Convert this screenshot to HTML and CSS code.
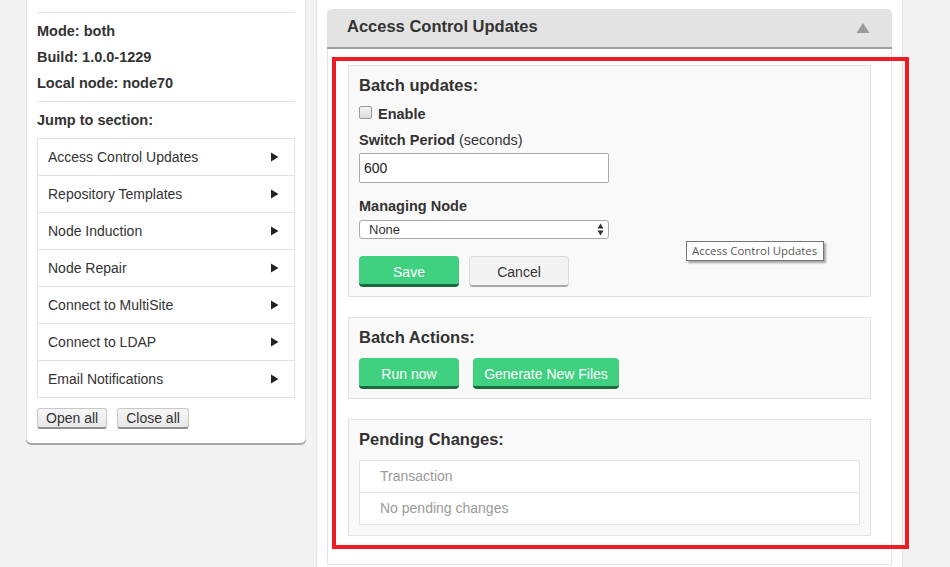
FILE: index.html
```html
<!DOCTYPE html>
<html lang="en">
<head>
<meta charset="utf-8">
<title>Access Control Updates</title>
<link rel="stylesheet" href="styles.css">
</head>
<body>
<div class="page">
  <aside class="sidebar">
    <div class="info">
      <div class="info-line">Mode: both</div>
      <div class="info-line">Build: 1.0.0-1229</div>
      <div class="info-line">Local node: node70</div>
    </div>
    <div class="jump-title">Jump to section:</div>
    <ul class="jump-list">
      <li><span>Access Control Updates</span><svg class="arrow" width="8" height="10" viewBox="0 0 8 10"><path d="M0 0.5 L7.5 5 L0 9.5 Z"/></svg></li>
      <li><span>Repository Templates</span><svg class="arrow" width="8" height="10" viewBox="0 0 8 10"><path d="M0 0.5 L7.5 5 L0 9.5 Z"/></svg></li>
      <li><span>Node Induction</span><svg class="arrow" width="8" height="10" viewBox="0 0 8 10"><path d="M0 0.5 L7.5 5 L0 9.5 Z"/></svg></li>
      <li><span>Node Repair</span><svg class="arrow" width="8" height="10" viewBox="0 0 8 10"><path d="M0 0.5 L7.5 5 L0 9.5 Z"/></svg></li>
      <li><span>Connect to MultiSite</span><svg class="arrow" width="8" height="10" viewBox="0 0 8 10"><path d="M0 0.5 L7.5 5 L0 9.5 Z"/></svg></li>
      <li><span>Connect to LDAP</span><svg class="arrow" width="8" height="10" viewBox="0 0 8 10"><path d="M0 0.5 L7.5 5 L0 9.5 Z"/></svg></li>
      <li><span>Email Notifications</span><svg class="arrow" width="8" height="10" viewBox="0 0 8 10"><path d="M0 0.5 L7.5 5 L0 9.5 Z"/></svg></li>
    </ul>
    <div class="side-buttons">
      <button class="small-btn">Open all</button>
      <button class="small-btn">Close all</button>
    </div>
  </aside>

  <main class="main">
    <div class="acc-header">
      <h2 class="acc-title">Access Control Updates</h2>
      <svg class="acc-toggle" width="14" height="10" viewBox="0 0 14 10"><path d="M7 0 L13.5 10 L0.5 10 Z"/></svg>
    </div>
    <div class="acc-body">
      <section class="box">
        <h3 class="box-title">Batch updates:</h3>
        <label class="check-row"><span class="checkbox"></span><span class="check-label">Enable</span></label>
        <div class="field-label label-period"><b>Switch Period</b> (seconds)</div>
        <input class="text-input" type="text" value="600">
        <div class="field-label label-node"><b>Managing Node</b></div>
        <div class="select-wrap">
          <select class="select"><option>None</option></select>
          <svg class="select-arrows" width="7" height="13" viewBox="0 0 7 13"><path d="M3.5 0.5 L6.5 5.5 L0.5 5.5 Z M3.5 12.5 L6.5 7.5 L0.5 7.5 Z"/></svg>
        </div>
        <div class="btn-row gap10">
          <button class="btn green w100">Save</button>
          <button class="btn grey w100">Cancel</button>
        </div>
      </section>

      <section class="box">
        <h3 class="box-title">Batch Actions:</h3>
        <div class="btn-row gap14 actions">
          <button class="btn green w100">Run now</button>
          <button class="btn green w146">Generate New Files</button>
        </div>
      </section>

      <section class="box last">
        <h3 class="box-title">Pending Changes:</h3>
        <table class="pending">
          <tr><td>Transaction</td></tr>
          <tr><td>No pending changes</td></tr>
        </table>
      </section>
    </div>
  </main>
</div>

<div class="tooltip">Access Control Updates</div>
<div class="highlight"></div>
</body>
</html>
```

FILE: styles.css
```css
html, body {
  margin: 0;
  padding: 0;
}
body {
  background: #f2f2f2;
  font-family: "Liberation Sans", Arial, sans-serif;
  color: #333;
  height: 567px;
  overflow: hidden;
  position: relative;
}
.page {
  display: flex;
  align-items: flex-start;
  padding-left: 26px;
  gap: 10px;
  height: 567px;
}

/* Sidebar */
.sidebar {
  width: 258px;
  background: #fff;
  border-left: 1px solid #e2e2e2;
  border-right: 1px solid #e2e2e2;
  border-radius: 0 0 5px 5px;
  box-shadow: 0 2px 0 #a8a8a8;
  padding: 12px 10px 14px;
}
.info {
  border-top: 1px solid #e3e3e3;
  border-bottom: 1px solid #e3e3e3;
  padding: 5px 0 5px;
}
.info-line {
  font-weight: bold;
  font-size: 14.5px;
  line-height: 26px;
}
.jump-title {
  font-weight: bold;
  font-size: 14.5px;
  line-height: 20px;
  margin-top: 8px;
}
.jump-list {
  list-style: none;
  margin: 8px 0 0;
  padding: 0;
  border: 1px solid #e3e3e3;
}
.jump-list li {
  height: 36px;
  display: flex;
  align-items: center;
  justify-content: space-between;
  padding: 0 15px 0 10px;
  font-size: 14px;
  border-top: 1px solid #e3e3e3;
}
.jump-list li:first-child {
  border-top: none;
}
.arrow path {
  fill: #222;
}
.side-buttons {
  display: flex;
  gap: 10px;
  margin-top: 10px;
}
.small-btn {
  font-family: "Liberation Sans", Arial, sans-serif;
  font-size: 14px;
  color: #333;
  height: 21px;
  padding: 0 8px;
  background: linear-gradient(#f6f6f6, #e8e8e8);
  border: 1px solid #c8c8c8;
  border-bottom: 2px solid #8f8f8f;
  border-radius: 3px;
  line-height: 17px;
}

/* Main column */
.main {
  width: 565px;
  height: 558px;
  background: #fff;
  border-left: 1px solid #e2e2e2;
  border-right: 1px solid #e2e2e2;
  padding: 9px 10px 0;
}
.acc-header {
  height: 38px;
  background: #e3e3e3;
  border-bottom: 2px solid #9e9e9e;
  border-radius: 5px 5px 0 0;
  display: flex;
  align-items: center;
  justify-content: space-between;
  padding: 0 22px 0 20px;
}
.acc-title {
  margin: 0;
  font-size: 16.5px;
  font-weight: bold;
  line-height: 20px;
  padding-bottom: 4px;
  color: #333;
}
.acc-toggle path {
  fill: #9a9a9a;
}
.acc-body {
  border-left: 1px solid #e3e3e3;
  border-right: 1px solid #e3e3e3;
  border-bottom: 1px solid #e3e3e3;
  padding: 16px 20px 28px;
  display: flex;
  flex-direction: column;
  gap: 20px;
}
.box {
  background: #f9f9f9;
  border: 1px solid #e3e3e3;
  padding: 9px 10px;
}
.box.last {
  padding-bottom: 10px;
}
.box-title {
  margin: 0;
  font-size: 16.5px;
  font-weight: bold;
  line-height: 20px;
  color: #333;
}
.check-row {
  display: flex;
  align-items: center;
  height: 20px;
  margin-top: 9px;
}
.checkbox {
  width: 11px;
  height: 11px;
  border: 1px solid #9a9a9a;
  border-radius: 2px;
  background: linear-gradient(#f4f4f4, #dcdcdc);
  margin-right: 6px;
  margin-top: -3px;
}
.check-label {
  font-weight: bold;
  font-size: 14.5px;
}
.field-label {
  font-size: 14.5px;
  line-height: 20px;
}
.field-label b {
  font-weight: bold;
}
.label-period {
  margin-top: 6px;
}
.text-input {
  display: block;
  box-sizing: border-box;
  width: 250px;
  height: 30px;
  margin-top: 3px;
  border: 1px solid #a9a9a9;
  border-radius: 2px;
  padding: 0 4px;
  font-family: "Liberation Sans", Arial, sans-serif;
  font-size: 14px;
  color: #222;
  background: #fff;
}
.label-node {
  margin-top: 13px;
}
.select-wrap {
  position: relative;
  width: 250px;
  margin-top: 4px;
}
.select {
  display: block;
  box-sizing: border-box;
  width: 250px;
  height: 19px;
  -webkit-appearance: none;
  appearance: none;
  border: 1px solid #a9a9a9;
  border-radius: 3px;
  background: #fff;
  padding: 0 0 0 9px;
  font-family: "Liberation Sans", Arial, sans-serif;
  font-size: 13px;
  color: #333;
}
.select-arrows {
  position: absolute;
  right: 5px;
  top: 3px;
}
.select-arrows path {
  fill: #333;
}
.btn-row {
  display: flex;
  margin-top: 17px;
}
.btn-row.actions {
  margin-top: 11px;
}
.gap10 { gap: 10px; }
.gap14 { gap: 14px; }
.btn {
  box-sizing: border-box;
  height: 31px;
  border-radius: 4px;
  font-family: "Liberation Sans", Arial, sans-serif;
  font-size: 14px;
  padding: 0;
}
.w100 { width: 100px; }
.w146 { width: 146px; }
.btn.green {
  background: #3fd080;
  color: #fff;
  border: none;
  border-bottom: 3px solid #1b6a3c;
  padding-top: 4px;
}
.btn.grey {
  background: #f3f3f3;
  color: #333;
  border: 1px solid #dadada;
  border-bottom: 2px solid #a8a8a8;
  padding-top: 2px;
}
.pending {
  width: 100%;
  margin-top: 11px;
  border-collapse: collapse;
  background: #fff;
}
.pending td {
  border: 1px solid #e3e3e3;
  height: 29px;
  padding: 0 20px 2px;
  font-size: 14px;
  color: #9a9a9a;
}

/* Overlays */
.tooltip {
  position: absolute;
  left: 686px;
  top: 241px;
  box-sizing: border-box;
  width: 138px;
  height: 20px;
  background: #fff;
  border: 1px solid #767676;
  box-shadow: 2px 2px 2px rgba(0, 0, 0, 0.35);
  font-family: "Open Sans", "Noto Sans", sans-serif;
  font-size: 11.4px;
  line-height: 18px;
  color: #575757;
  padding: 0 5px;
  white-space: nowrap;
}
.highlight {
  position: absolute;
  left: 332px;
  top: 57px;
  width: 569px;
  height: 484px;
  border: 4px solid #ed1c24;
  pointer-events: none;
}
```
